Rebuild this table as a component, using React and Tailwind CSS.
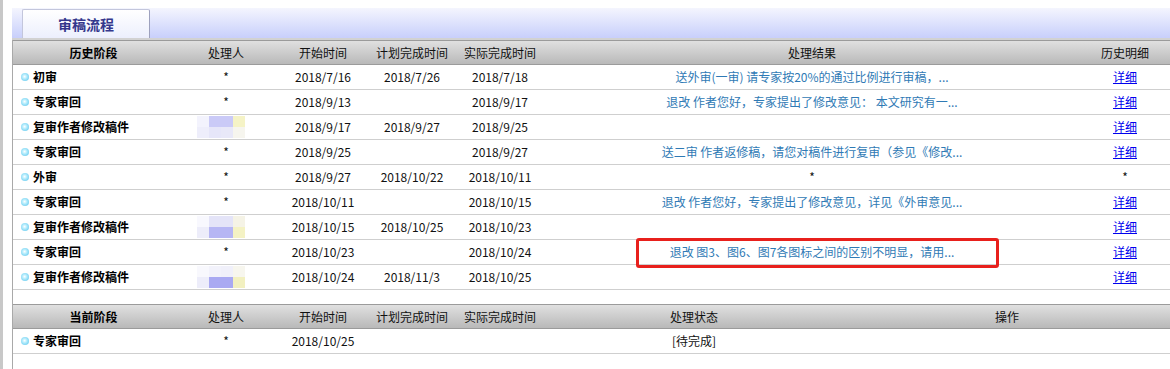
const history = [
  { stage: "初审", who: "*", start: "2018/7/16", plan: "2018/7/26", done: "2018/7/18", result: "送外审(一审) 请专家按20%的通过比例进行审稿，...", detail: "link" },
  { stage: "专家审回", who: "*", start: "2018/9/13", plan: "", done: "2018/9/17", result: "退改 作者您好，专家提出了修改意见： 本文研究有一...", detail: "link" },
  { stage: "复审作者修改稿件", who: "blobA", start: "2018/9/17", plan: "2018/9/27", done: "2018/9/25", result: "", detail: "link" },
  { stage: "专家审回", who: "*", start: "2018/9/25", plan: "", done: "2018/9/27", result: "送二审 作者返修稿，请您对稿件进行复审（参见《修改...", detail: "link" },
  { stage: "外审", who: "*", start: "2018/9/27", plan: "2018/10/22", done: "2018/10/11", result: "*", detail: "*" },
  { stage: "专家审回", who: "*", start: "2018/10/11", plan: "", done: "2018/10/15", result: "退改 作者您好，专家提出了修改意见，详见《外审意见...", detail: "link" },
  { stage: "复审作者修改稿件", who: "blobB", start: "2018/10/15", plan: "2018/10/25", done: "2018/10/23", result: "", detail: "link" },
  { stage: "专家审回", who: "*", start: "2018/10/23", plan: "", done: "2018/10/24", result: "退改 图3、图6、图7各图标之间的区别不明显，请用...", detail: "link" },
  { stage: "复审作者修改稿件", who: "blobC", start: "2018/10/24", plan: "2018/11/3", done: "2018/10/25", result: "", detail: "link" },
];

function Bullet() {
  return (
    <span className="w-[8px] h-[8px] rounded-full shrink-0 bg-[radial-gradient(circle_at_45%_45%,#ffffff_0%,#b4ecfc_35%,#4fbfea_100%)]" />
  );
}

// blurred-out handler name
function Blob({ kind }) {
  const tiles = {
    blobA: [
      ["#f3f3fd", "#cacaf7", "#cacaf7", "#f5f3c6"],
      ["#eeeefb", "#e6e6f9", "#e8e8f8", "#f6f5ee"],
    ],
    blobB: [
      ["#f8f8fe", "#e4e4f8", "#e4e4f8", "#f5f3e6"],
      ["#ededfa", "#b6b6f4", "#b6b6f4", "#f4f2c4"],
    ],
    blobC: [
      ["#f8f8fd", "#f2f2fb", "#f0f0fa", "#f7f6ee"],
      ["#ededfa", "#a9a9f2", "#a9a9f2", "#f2f0c0"],
    ],
  }[kind];
  return (
    <div className="flex flex-col rounded-[6px] bg-[#fafafe] px-[0px]">
      {tiles.map((row, i) => (
        <div key={i} className="flex">
          {row.map((c, j) => (
            <span key={j} className="w-[12px] h-[11px]" style={{ backgroundColor: c }} />
          ))}
        </div>
      ))}
    </div>
  );
}

function HistoryRow({ r }) {
  return (
    <div className="grid grid-cols-[161px_104px_90px_88px_88px_536px_90px] h-[25px] border-b border-[#cfcfcf] items-center text-[12px] text-[#111]">
      <div className="flex items-center gap-[4px] pl-[8px] font-bold text-black">
        <Bullet />
        <span>{r.stage}</span>
      </div>
      <div className={r.who === "*" ? "flex justify-center" : "flex justify-start pl-[23px]"}>
        {r.who === "*" ? <span>*</span> : <Blob kind={r.who} />}
      </div>
      <div className="text-center">{r.start}</div>
      <div className="text-center">{r.plan}</div>
      <div className="text-center">{r.done}</div>
      <div className={r.result === "*" ? "text-center text-[#111]" : "text-center text-[#2f7ab5]"}>{r.result}</div>
      <div className="text-center">
        {r.detail === "link" ? (
          <a href="#" className="text-[#0000ee] underline">详细</a>
        ) : (
          <span>*</span>
        )}
      </div>
    </div>
  );
}

function HeaderRow({ cols, grid }) {
  return (
    <div className={`grid ${grid} h-[25px] items-center border-y border-[#9b9b9b] bg-linear-to-b from-[#e0e0e0] to-[#b9b9b9] text-[12px] text-[#111]`}>
      {cols.map((c, i) => (
        <div key={i} className={i === 0 ? "text-center font-bold text-black" : "text-center"}>
          {c}
        </div>
      ))}
    </div>
  );
}

export default function App() {
  return (
    <div className="relative flex w-[1170px] h-[369px] overflow-hidden bg-white font-['Noto_Sans_CJK_SC',sans-serif] leading-none">
      <div className="w-[3px] shrink-0 bg-[#c8c8c8]" />
      <div className="w-[9px] shrink-0" />
      <div className="flex-1 flex flex-col pt-[8px]">
        <div className="h-[30px] flex items-end pl-[10px] bg-linear-to-b from-[#f4f5fe] to-[#c8cffb]">
          <div className="w-[128px] h-[29px] flex items-center justify-center border border-[#c3c6dc] border-r-[#9da1be] border-b-0 rounded-t-[2px] bg-linear-to-b from-white to-[#eceffd] text-[14px] font-bold text-[#34378c]">
            审稿流程
          </div>
        </div>
        <div className="h-[2px] bg-[#d2d2d2]" />
        <div className="flex-1 flex flex-col border-l border-[#a9a9a9]">
          <HeaderRow
            grid="grid-cols-[161px_104px_90px_88px_88px_536px_90px]"
            cols={["历史阶段", "处理人", "开始时间", "计划完成时间", "实际完成时间", "处理结果", "历史明细"]}
          />
          {history.map((r, i) => (
            <HistoryRow key={i} r={r} />
          ))}
          <div className="h-[14px]" />
          <HeaderRow
            grid="grid-cols-[161px_104px_90px_88px_88px_300px_326px]"
            cols={["当前阶段", "处理人", "开始时间", "计划完成时间", "实际完成时间", "处理状态", "操作"]}
          />
          <div className="grid grid-cols-[161px_104px_90px_88px_88px_300px_326px] h-[25px] border-b border-[#cfcfcf] items-center text-[12px] text-[#111]">
            <div className="flex items-center gap-[4px] pl-[8px] font-bold text-black">
              <Bullet />
              <span>专家审回</span>
            </div>
            <div className="text-center">*</div>
            <div className="text-center">2018/10/25</div>
            <div />
            <div />
            <div className="text-center">[待完成]</div>
            <div />
          </div>
        </div>
      </div>
      <div className="absolute left-[636px] top-[238px] w-[363px] h-[30px] border-[3px] border-[#e8201c] rounded-[3px]" />
    </div>
  );
}
